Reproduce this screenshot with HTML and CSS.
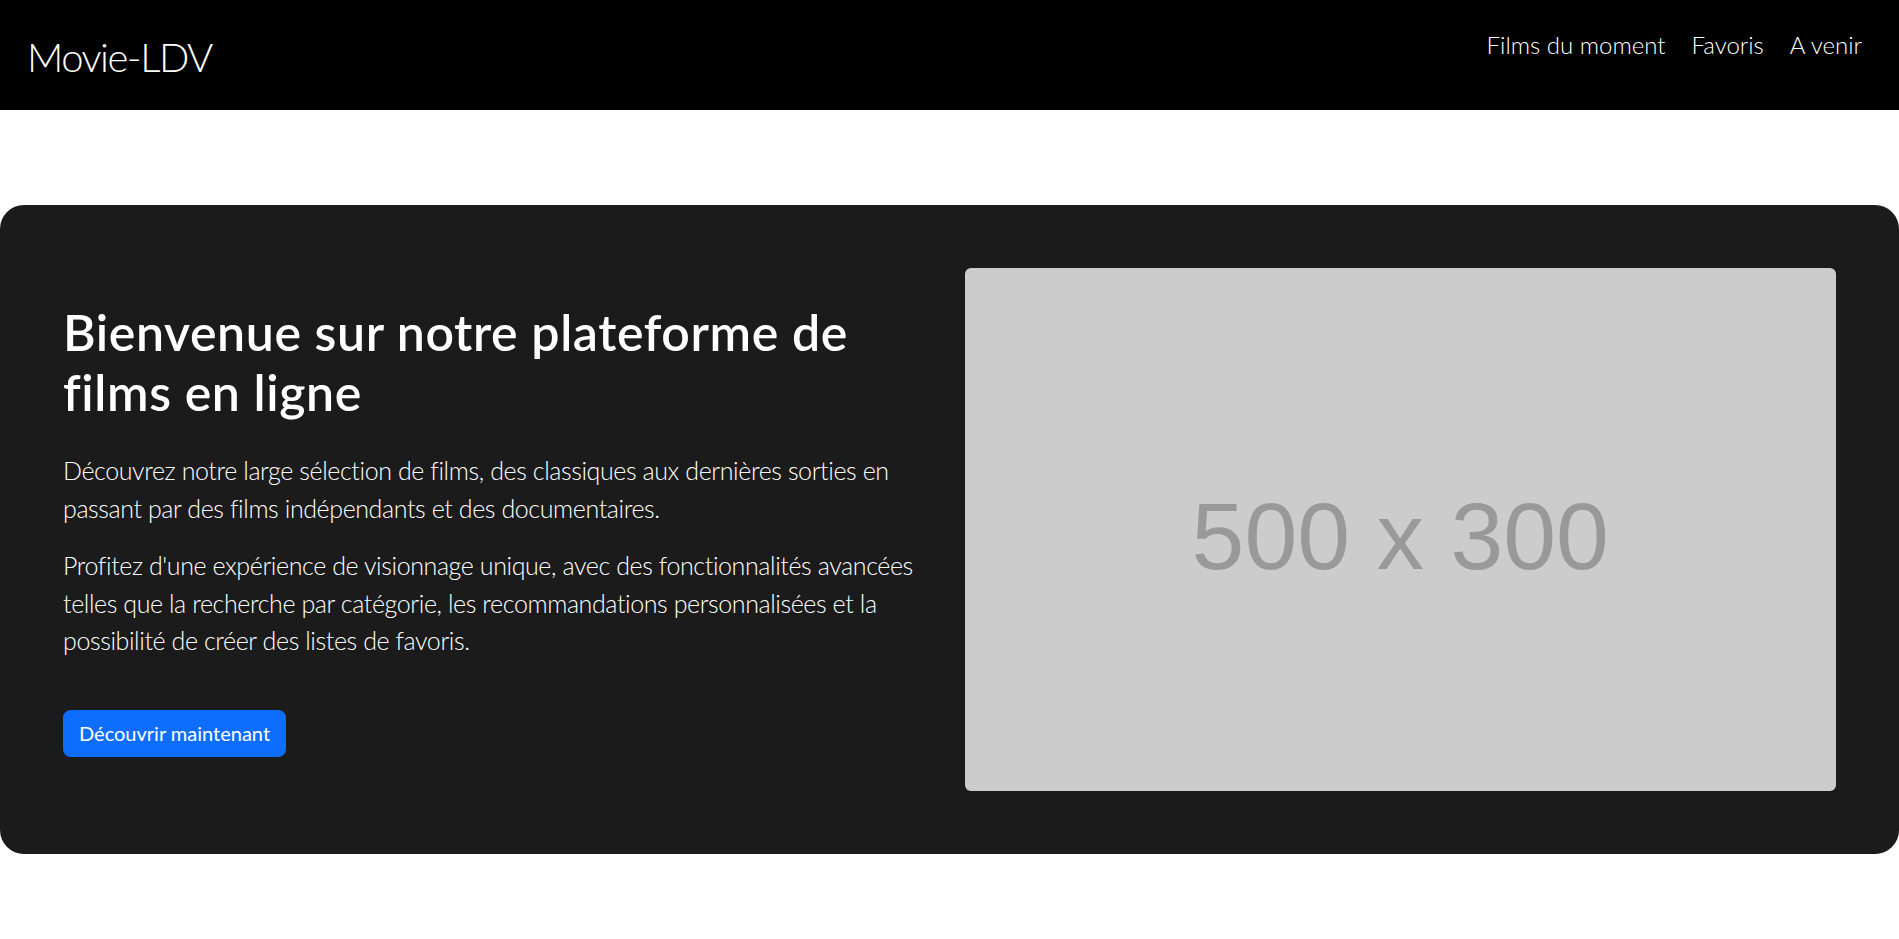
FILE: index.html
```html
<!DOCTYPE html>
<html lang="fr">
<head>
  <meta charset="UTF-8" />
  <meta name="viewport" content="width=device-width, initial-scale=1.0"/>
  <title>Movie-LDV</title>
  <link rel="stylesheet" href="styles.css">
</head>
<body>
  <header class="top-bar">
    <a class="brand" href="#">Movie-LDV</a>
    <nav class="nav-links">
      <a href="#">Films du moment</a>
      <a href="#">Favoris</a>
      <a href="#">A venir</a>
    </nav>
  </header>

  <main>
    <section class="hero">
      <div class="hero-text">
        <h1>Bienvenue sur notre plateforme de films en ligne</h1>
        <p class="lead">Découvrez notre large sélection de films, des classiques aux dernières sorties en passant par des films indépendants et des documentaires.</p>
        <p class="lead last">Profitez d'une expérience de visionnage unique, avec des fonctionnalités avancées telles que la recherche par catégorie, les recommandations personnalisées et la possibilité de créer des listes de favoris.</p>
        <a class="btn-primary" href="#">Découvrir maintenant</a>
      </div>
      <div class="hero-image">
        <span>500 x 300</span>
      </div>
    </section>
  </main>
</body>
</html>
```

FILE: styles.css
```css
* { box-sizing: border-box; margin: 0; padding: 0; }
body {
  font-family: 'Lato', 'Open Sans', sans-serif;
  background: #fff;
  color: #212529;
  min-height: 100vh;
}
a { text-decoration: none; color: inherit; }

/* barre du haut */
.top-bar {
  background: #000;
  height: 110px;
  display: flex;
  align-items: flex-start;
  justify-content: space-between;
  padding: 27px 37px 0 27px;
}
.brand {
  color: #fff;
  font-size: 40px;
  font-weight: 300;
  line-height: 1.5;
  letter-spacing: -1.5px;
}
.nav-links {
  display: flex;
  gap: 26px;
}
.nav-links a {
  color: #fff;
  font-size: 24px;
  font-weight: 300;
  line-height: 1.5;
}

/* bloc d'accueil */
.hero {
  margin-top: 95px;
  background: #1b1b1b;
  border-radius: 24px;
  padding: 63px;
  display: grid;
  grid-template-columns: 1fr 1fr;
  gap: 30px;
  align-items: center;
  color: #fff;
}
.hero-text h1 {
  font-size: 50px;
  font-weight: 600;
  line-height: 1.2;
  letter-spacing: 0.6px;
  margin-bottom: 30px;
}
.lead {
  font-size: 25px;
  font-weight: 300;
  line-height: 1.5;
  letter-spacing: -0.4px;
  margin-bottom: 20px;
}
.lead.last {
  margin-bottom: 50px;
}
.btn-primary {
  display: inline-block;
  background: #0d6efd;
  border: 1px solid #0d6efd;
  color: #fff;
  font-size: 20px;
  line-height: 1.5;
  padding: 7.5px 15px;
  border-radius: 7.5px;
}
.hero-image {
  aspect-ratio: 5 / 3;
  background: #ccc;
  border-radius: 6px;
  display: flex;
  align-items: center;
  justify-content: center;
}
.hero-image span {
  font-family: 'Liberation Sans', Arial, sans-serif;
  font-size: 95px;
  color: #999;
  padding-top: 14px;
}
```
